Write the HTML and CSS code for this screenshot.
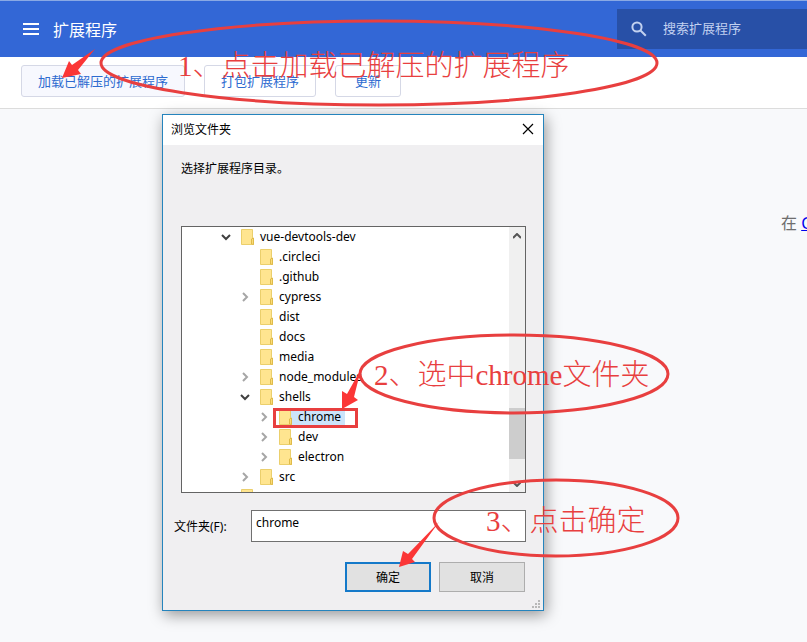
FILE: index.html
```html
<!DOCTYPE html>
<html lang="zh-CN">
<head>
    <meta charset="UTF-8">
    <meta name="viewport" content="width=device-width, initial-scale=1.0">
    <title>扩展程序</title>
    <link rel="stylesheet" href="styles.css">
</head>
<body>
    <!-- Icons used more than once -->
    <svg class="icon-defs" aria-hidden="true">
        <symbol id="folder" viewBox="0 0 13 16">
            <path d="M0.5 0.5h11v9h1v6h-12z" fill="#ffe590" stroke="#ebcf6c"/>
            <path d="M10.5 15v-5l2-1v6.500z" fill="#fbdc78" stroke="#dfbb4a"/>
        </symbol>
        <symbol id="chevron-right" viewBox="0 0 12 12">
            <path d="M4 2l4 4-4 4" fill="none" stroke="#a6a6a6" stroke-width="2"/>
        </symbol>
        <symbol id="chevron-down" viewBox="0 0 12 12">
            <path d="M2 4l4 4 4-4" fill="none" stroke="#404040" stroke-width="2"/>
        </symbol>
    </svg>

    <header class="header">
        <button class="menu-button" aria-label="主菜单">
            <svg width="16" height="12" viewBox="0 0 16 12"><path d="M0 1h16M0 6h16M0 11h16" stroke="#fff" stroke-width="2"/></svg>
        </button>
        <h1 class="header-title">扩展程序</h1>
        <label class="search">
            <svg width="16" height="16" viewBox="0 0 16 16" fill="none" stroke="#c2d1f0" stroke-width="2"><circle cx="6" cy="6" r="4.6"/><path d="M9.5 9.5l5.3 5.3"/></svg>
            <input class="search-input" type="text" placeholder="搜索扩展程序" aria-label="搜索扩展程序">
        </label>
    </header>

    <div class="toolbar">
        <button class="toolbar-button">加载已解压的扩展程序</button>
        <button class="toolbar-button">打包扩展程序</button>
        <button class="toolbar-button">更新</button>
    </div>

    <main class="content">
        <p class="empty-message">在 <a href="#">Chrome</a></p>
    </main>

    <!-- Folder picker -->
    <div class="dialog" role="dialog" aria-labelledby="dialog-title">
        <div class="dialog-titlebar">
            <h2 class="dialog-title" id="dialog-title">浏览文件夹</h2>
            <button class="close-button" aria-label="关闭">
                <svg width="12" height="12" viewBox="0 0 12 12"><path d="M1 1l10 10M11 1L1 11" stroke="#000" stroke-width="1.2"/></svg>
            </button>
        </div>
        <div class="dialog-body">
            <p class="dialog-text">选择扩展程序目录。</p>

            <div class="tree-box">
                <ul class="tree">
                    <li>
                        <div class="row"><svg class="toggle"><use href="#chevron-down"/></svg><svg class="folder"><use href="#folder"/></svg><span>vue-devtools-dev</span></div>
                        <ul>
                            <li><div class="row"><span class="toggle"></span><svg class="folder"><use href="#folder"/></svg><span>.circleci</span></div></li>
                            <li><div class="row"><span class="toggle"></span><svg class="folder"><use href="#folder"/></svg><span>.github</span></div></li>
                            <li><div class="row"><svg class="toggle"><use href="#chevron-right"/></svg><svg class="folder"><use href="#folder"/></svg><span>cypress</span></div></li>
                            <li><div class="row"><span class="toggle"></span><svg class="folder"><use href="#folder"/></svg><span>dist</span></div></li>
                            <li><div class="row"><span class="toggle"></span><svg class="folder"><use href="#folder"/></svg><span>docs</span></div></li>
                            <li><div class="row"><span class="toggle"></span><svg class="folder"><use href="#folder"/></svg><span>media</span></div></li>
                            <li><div class="row"><svg class="toggle"><use href="#chevron-right"/></svg><svg class="folder"><use href="#folder"/></svg><span>node_modules</span></div></li>
                            <li>
                                <div class="row"><svg class="toggle"><use href="#chevron-down"/></svg><svg class="folder"><use href="#folder"/></svg><span>shells</span></div>
                                <ul>
                                    <li><div class="row selected"><svg class="toggle"><use href="#chevron-right"/></svg><svg class="folder"><use href="#folder"/></svg><span>chrome</span></div></li>
                                    <li><div class="row"><svg class="toggle"><use href="#chevron-right"/></svg><svg class="folder"><use href="#folder"/></svg><span>dev</span></div></li>
                                    <li><div class="row"><svg class="toggle"><use href="#chevron-right"/></svg><svg class="folder"><use href="#folder"/></svg><span>electron</span></div></li>
                                </ul>
                            </li>
                            <li><div class="row"><svg class="toggle"><use href="#chevron-right"/></svg><svg class="folder"><use href="#folder"/></svg><span>src</span></div></li>
                        </ul>
                    </li>
                    <li><div class="row"><span class="toggle"></span><svg class="folder"><use href="#folder"/></svg></div></li>
                </ul>
                <div class="scrollbar">
                    <svg width="8" height="6" viewBox="0 0 8 6"><path d="M0 5l4-4 4 4" fill="none" stroke="#555" stroke-width="2"/></svg>
                    <div class="scroll-thumb"></div>
                    <svg width="8" height="6" viewBox="0 0 8 6"><path d="M0 1l4 4 4-4" fill="none" stroke="#555" stroke-width="2"/></svg>
                </div>
            </div>

            <div class="field">
                <label for="folder-name">文件夹(F):</label>
                <input class="field-input" id="folder-name" type="text" value="chrome">
            </div>

            <div class="dialog-buttons">
                <button class="dialog-button primary">确定</button>
                <button class="dialog-button">取消</button>
            </div>
        </div>
        <svg class="grip" width="8" height="8" viewBox="0 0 8 8" fill="#b8b8b8"><path d="M6 0h2v2h-2zM3 3h2v2h-2zM6 3h2v2h-2zM0 6h2v2h-2zM3 6h2v2h-2zM6 6h2v2h-2z"/></svg>
    </div>

    <!-- Step notes drawn over the page -->
    <svg class="notes" width="807" height="642" viewBox="0 0 807 642">
        <g fill="none" stroke="#e83f3f" stroke-width="3">
            <ellipse cx="379" cy="63" rx="278" ry="42"/>
            <ellipse cx="514" cy="374" rx="154" ry="39"/>
            <ellipse cx="556" cy="518" rx="122" ry="38"/>
        </g>
        <path d="M273 408h85v20h-85zM276 411v14h79v-14z" fill="#e83f3f" fill-rule="evenodd"/>
        <g fill="#fb3636">
            <path d="M62 78L69 61L72 65L95 49L78 70L81 74Z"/>
            <path d="M342 409L342 391L347 394L361 369L354 397L358 400Z"/>
            <path d="M399 567L403 551L408 554L439 522L412 559L415 562Z"/>
        </g>
        <g class="note-text">
            <text x="178" y="76">1、点击加载已解压的扩展程序</text>
            <text x="374" y="385">2、选中chrome文件夹</text>
            <text x="486" y="531">3、点击确定</text>
        </g>
    </svg>
</body>
</html>
```
FILE: styles.css
```css
* {
    box-sizing: border-box;
}

body {
    margin: 0;
    min-height: 100vh;
    display: flex;
    flex-direction: column;
    position: relative;
    overflow: hidden;
    background-color: #f8f9fb;
    font-family: "Noto Sans", "Noto Sans CJK SC", sans-serif;
    font-size: 12px;
    color: #000;
}

h1, h2, p, ul {
    margin: 0;
    padding: 0;
    font-weight: normal;
}

button, input {
    font: inherit;
}

.icon-defs {
    position: absolute;
    width: 0;
    height: 0;
}

/* Page header */
.header {
    display: flex;
    align-items: center;
    height: 57px;
    padding-left: 23px;
    border-top: 1px solid #8aa9e4;
    background-color: #3367d6;
    color: #fff;
}

.menu-button {
    display: flex;
    padding: 0;
    border: none;
    background: none;
}

.header-title {
    margin-left: 14px;
    font-size: 16px;
}

.search {
    display: flex;
    align-items: center;
    gap: 16px;
    width: 190px;
    height: 40px;
    margin-left: auto;
    padding-left: 14px;
    background-color: #2850a7;
}

.search svg {
    flex: none;
}

.search-input {
    flex: 1;
    min-width: 0;
    padding: 0 0 2px;
    border: none;
    outline: none;
    background: none;
    color: #fff;
    font-size: 13px;
}

.search-input::placeholder {
    color: #c2d1f0;
}

/* Developer toolbar */
.toolbar {
    display: flex;
    align-items: flex-start;
    gap: 19px;
    height: 52px;
    padding: 8px 21px;
    border-bottom: 1px solid #dcdcdc;
    background-color: #fff;
}

.toolbar-button {
    height: 32px;
    padding: 0 16px 2px;
    border: 1px solid #d5d8e6;
    border-radius: 3px;
    background-color: #fff;
    color: #2d6bd0;
    font-size: 13px;
}

.toolbar-button:first-child {
    background-color: #f7f8fe;
}

.toolbar-button:last-child {
    padding: 0 19px 2px;
}

.content {
    flex: 1;
    padding-top: 102px;
    overflow: hidden;
}

.empty-message {
    margin-left: auto;
    width: 26px;
    white-space: nowrap;
    font-size: 16px;
    line-height: 24px;
    color: #6e6e6e;
}

.empty-message a {
    color: #0000ee;
}

/* Folder picker window */
.dialog {
    position: absolute;
    top: 114px;
    left: 162px;
    width: 382px;
    border: 1px solid #2584bd;
    background-color: #f0eff1;
    box-shadow: 2px 4px 14px rgba(0, 0, 0, 0.4);
}

.dialog-titlebar {
    display: flex;
    align-items: center;
    justify-content: space-between;
    height: 30px;
    padding: 0 9px 2px 8px;
    background-color: #fff;
}

.dialog-title {
    font-size: 12px;
}

.close-button {
    display: flex;
    padding: 0;
    border: none;
    background: none;
}

.dialog-body {
    padding: 14px 17px 18px 18px;
}

.dialog-text {
    height: 67px;
    line-height: 20px;
}

.tree-box {
    display: flex;
    height: 267px;
    border: 1px solid #646464;
    background-color: #fff;
    overflow: hidden;
}

.tree {
    flex: 1;
    padding-left: 38px;
    list-style: none;
    font-size: 12px;
}

.tree ul {
    padding-left: 19px;
    list-style: none;
}

.row {
    display: flex;
    align-items: center;
    height: 20px;
    line-height: 18px;
    white-space: nowrap;
}

.toggle {
    flex: none;
    width: 12px;
    height: 12px;
    margin-right: 9px;
}

.folder {
    flex: none;
    width: 13px;
    height: 16px;
}

.row span:last-child {
    padding: 0 4px 0 6px;
}

.selected span,
.selected .folder {
    background-color: #cce4fa;
}

.scrollbar {
    display: flex;
    flex-direction: column;
    align-items: center;
    width: 16px;
    padding: 6px 0 5px;
    background-color: #f0f0f0;
}

.scroll-thumb {
    width: 100%;
    height: 51px;
    margin: auto 0 22px;
    background-color: #cdcdcd;
}

.field {
    display: flex;
    align-items: center;
    justify-content: space-between;
    margin: 17px 0 20px -7px;
}

.field-input {
    width: 275px;
    height: 32px;
    padding: 0 4px 8px;
    border: 1px solid #707070;
    background-color: #fff;
}

.dialog-buttons {
    display: flex;
    justify-content: flex-end;
    gap: 8px;
    padding-right: 1px;
}

.dialog-button {
    width: 86px;
    height: 30px;
    padding: 0;
    border: 1px solid #adadad;
    background-color: #e1e1e1;
    color: #000;
}

.dialog-button.primary {
    border: 2px solid #1479c9;
}

.grip {
    position: absolute;
    right: 3px;
    bottom: 2px;
}

/* Notes over the page */
.notes {
    position: absolute;
    top: 0;
    left: 0;
    pointer-events: none;
}

.note-text {
    fill: #e83f3f;
    font-family: "Liberation Serif", "Noto Sans CJK SC", serif;
    font-size: 29px;
    font-weight: 300;
}
```
